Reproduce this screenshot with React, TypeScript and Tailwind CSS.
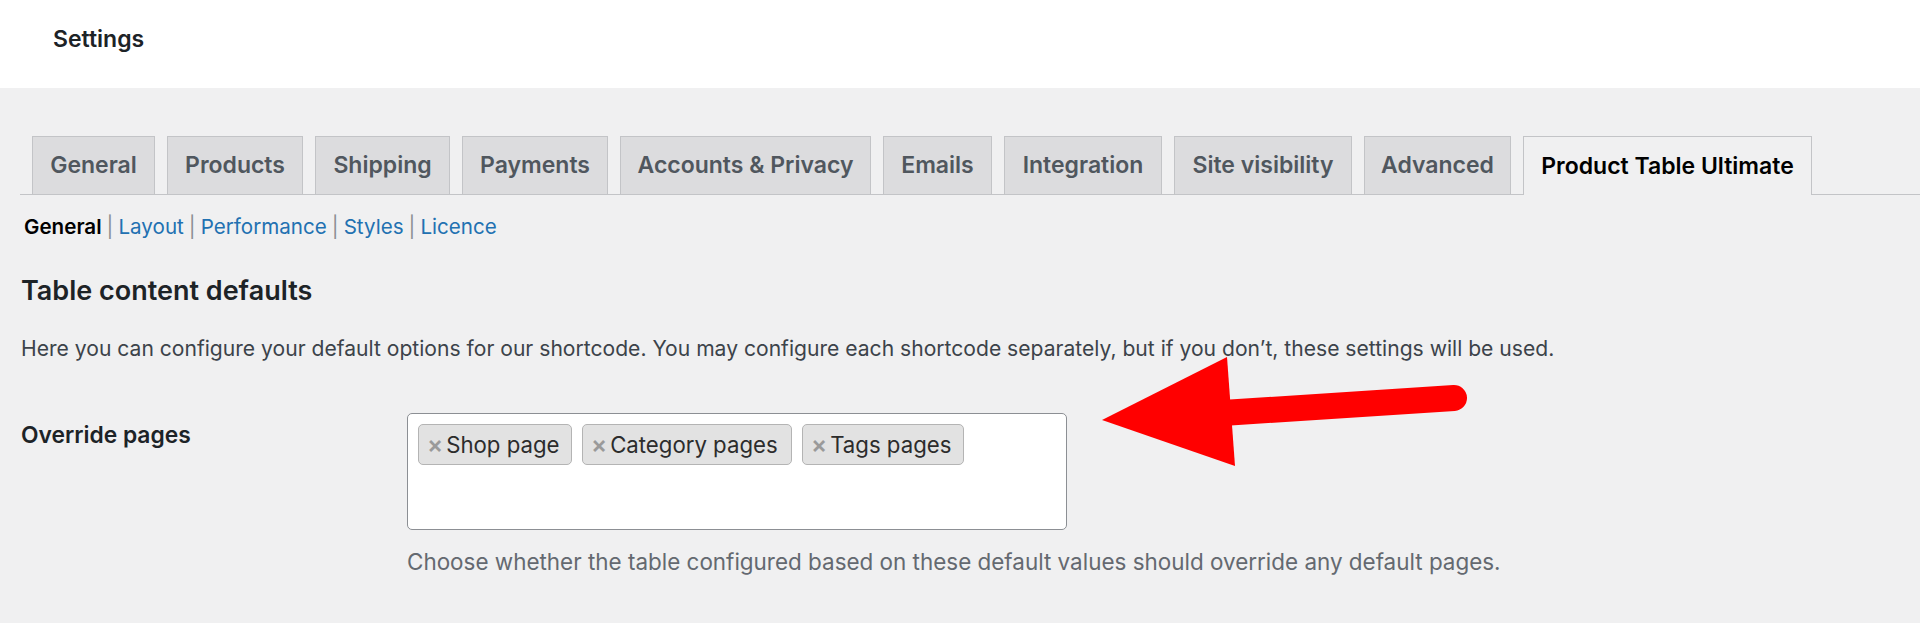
import React from "react";

const tabs = [
  { label: "General", w: "w-[123px]" },
  { label: "Products", w: "w-[136px]" },
  { label: "Shipping", w: "w-[135px]" },
  { label: "Payments", w: "w-[146px]" },
  { label: "Accounts & Privacy", w: "w-[251px]" },
  { label: "Emails", w: "w-[109px]" },
  { label: "Integration", w: "w-[158px]" },
  { label: "Site visibility", w: "w-[178px]" },
  { label: "Advanced", w: "w-[147px]" },
];

const subnav = ["Layout", "Performance", "Styles", "Licence"];

const chips = [
  { label: "Shop page", w: "w-[154px]" },
  { label: "Category pages", w: "w-[210px]" },
  { label: "Tags pages", w: "w-[162px]" },
];

export default function App() {
  return (
    <div className="relative min-h-[623px] w-full overflow-hidden bg-[#f0f0f1] font-['Inter','Noto_Sans',sans-serif] text-[#3c434a]">
      <header className="flex h-[88px] items-center bg-white pb-[10px] pl-[53px]">
        <h1 className="text-[23px] font-semibold leading-none text-[#1d2327]">Settings</h1>
      </header>

      <div className="pl-[20px]">
        <nav className="mt-[48px] flex h-[59px] gap-[12px] border-b border-[#c3c4c7] pl-[12px]">
          {tabs.map((t) => (
            <div
              key={t.label}
              className={`${t.w} flex h-[58px] items-center justify-center border border-b-0 border-[#c3c4c7] bg-[#dcdcde] text-[23px] font-semibold text-[#50575e]`}
            >
              {t.label}
            </div>
          ))}
          <div className="mb-[-1px] flex h-[59px] w-[289px] items-center justify-center border border-b-0 border-[#c3c4c7] bg-[#f0f0f1] text-[23px] font-semibold text-[#000]">
            Product Table Ultimate
          </div>
        </nav>

        <div className="mt-[16px] flex items-center pl-[4px] text-[20.6px] leading-[32px]">
          <span className="font-semibold text-[#000]">General</span>
          {subnav.map((s) => (
            <React.Fragment key={s}>
              <span className="px-[5px] text-[#8c8f94]">|</span>
              <span className="text-[#2271b1]">{s}</span>
            </React.Fragment>
          ))}
        </div>

        <h2 className="mt-[31px] pl-[1px] text-[27px] font-semibold leading-[34px] text-[#1d2327]">
          Table content defaults
        </h2>

        <p className="mt-[25px] pl-[1px] text-[21.1px] leading-[32px] text-[#3c434a]">
          Here you can configure your default options for our shortcode. You may configure each shortcode separately, but if you don’t, these settings will be used.
        </p>

        <div className="mt-[48px] flex">
          <div className="w-[387px] pl-[1px] pt-[6px] text-[22.8px] font-semibold leading-[32px] text-[#1d2327]">
            Override pages
          </div>
          <div>
            <div className="flex h-[117px] w-[660px] items-start gap-[10px] rounded-[5px] border border-[#8c8f94] bg-white p-[10px]">
              {chips.map((c) => (
                <div
                  key={c.label}
                  className={`${c.w} flex h-[41px] items-center rounded-[5px] border border-[#b4b4b4] bg-[#e2e2e2] pl-[8px] text-[22.2px] text-[#2c2c2c]`}
                >
                  <span className="mr-[3px] text-[24px] font-semibold leading-none text-[#9a9a9a]">×</span>
                  <span>{c.label}</span>
                </div>
              ))}
            </div>
            <p className="mt-[16px] text-[22.45px] leading-[32px] text-[#646970]">
              Choose whether the table configured based on these default values should override any default pages.
            </p>
          </div>
        </div>
      </div>

      <svg
        className="pointer-events-none absolute left-0 top-0"
        width="1920"
        height="623"
        viewBox="0 0 1920 623"
      >
        <line x1="1215" y1="413.5" x2="1454" y2="398" stroke="#ff0000" strokeWidth="26" strokeLinecap="round" />
        <polygon points="1102,420 1227,357 1235,466" fill="#ff0000" />
      </svg>
    </div>
  );
}
